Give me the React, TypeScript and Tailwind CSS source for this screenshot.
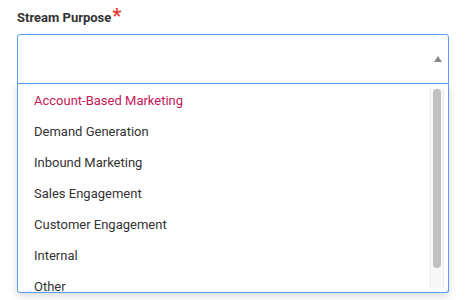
import { useState } from 'react';

const options = [
  'Account-Based Marketing',
  'Demand Generation',
  'Inbound Marketing',
  'Sales Engagement',
  'Customer Engagement',
  'Internal',
  'Other',
];

export default function App() {
  const [selected] = useState(options[0]);

  return (
    <div className="w-[467px] h-[300px] bg-white px-[17px] pt-[8px] font-['Roboto',sans-serif]">
      <label className="flex items-start text-[13px] font-bold text-[#333] leading-[20px]">
        Stream Purpose
        <span className="text-[#e53935] text-[20px] leading-[16px] ml-[1px] font-bold">*</span>
      </label>

      <div className="mt-[6px] w-[432px]">
        {/* Select box */}
        <div className="h-[50px] border border-[#5b9cf6] rounded-t-[3px] flex items-center justify-end pr-[6px]">
          <svg width="8" height="6" viewBox="0 0 8 6">
            <path d="M4 0 L8 6 L0 6 Z" fill="#888" />
          </svg>
        </div>

        {/* Dropdown */}
        <div className="h-[209px] border border-t-0 border-[#5b9cf6] rounded-b-[3px] shadow-[0_3px_8px_rgba(0,0,0,0.15)] flex">
          <ul className="flex-1 overflow-hidden pt-[1px] pb-[3px]">
            {options.map((opt) => (
              <li
                key={opt}
                className={`h-[31px] flex items-center pl-[16px] text-[13px] ${
                  opt === selected ? 'text-[#c2185b]' : 'text-[#333]'
                }`}
              >
                {opt}
              </li>
            ))}
          </ul>
          <div className="w-[14px] mr-[4px] my-[4px] bg-[#f7f7f7] border-x border-[#ececec] flex justify-center pt-[1px]">
            <div className="w-[8px] h-[179px] rounded-full bg-[#c1c1c1]" />
          </div>
        </div>
      </div>
    </div>
  );
}
